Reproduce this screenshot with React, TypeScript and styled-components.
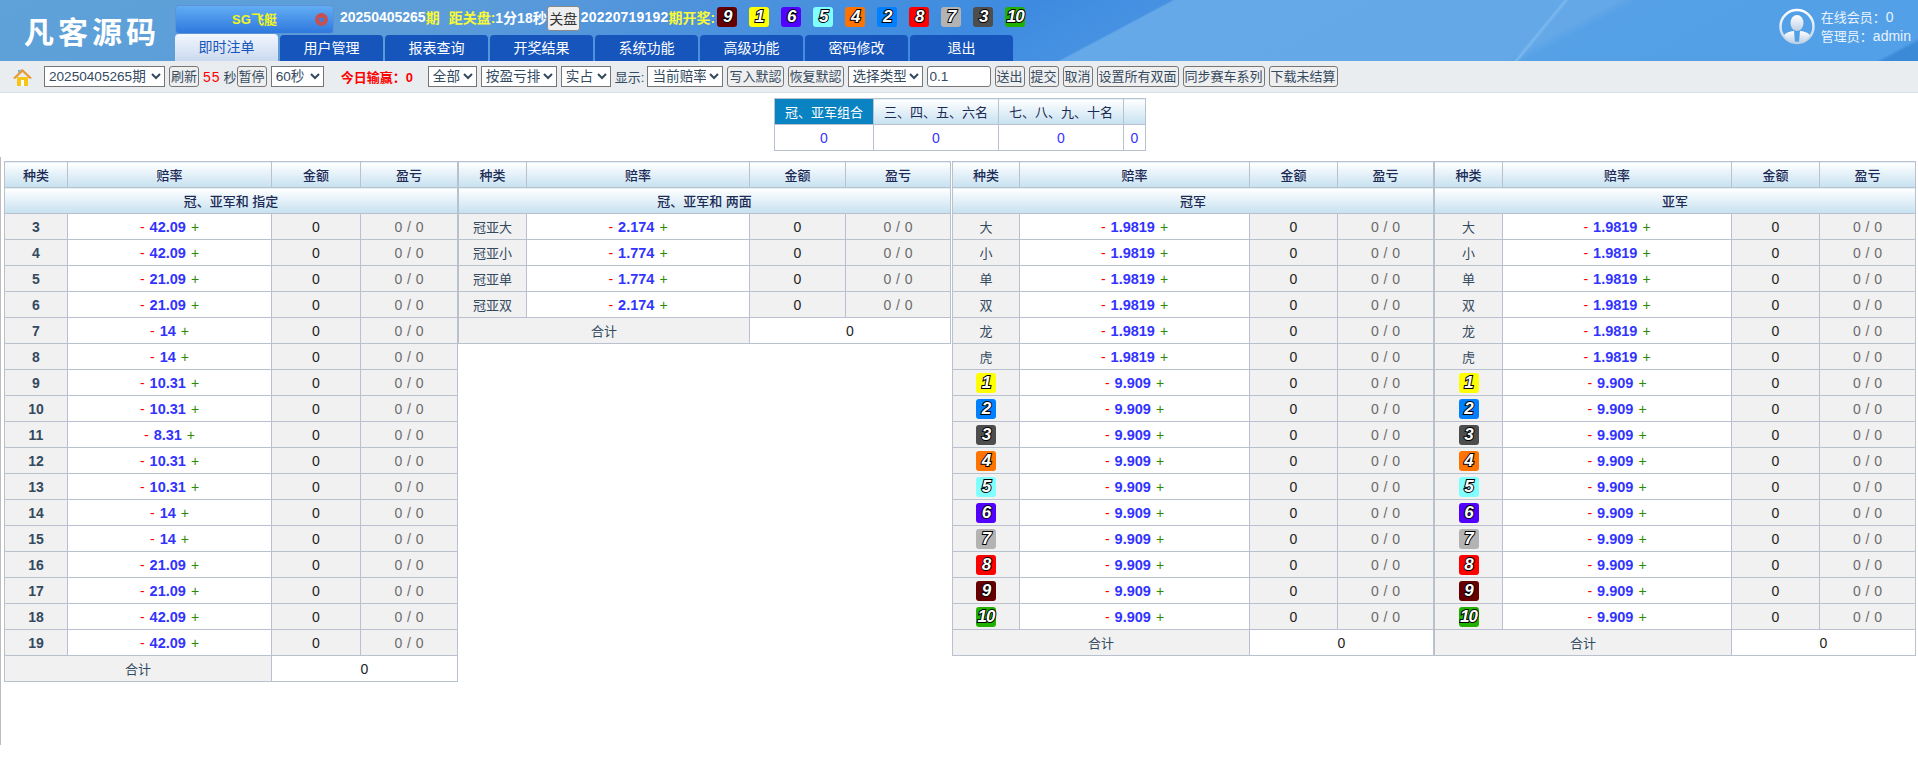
import styled, { createGlobalStyle } from 'styled-components'

const GlobalStyle = createGlobalStyle`
    html, body {
        margin: 0;
        padding: 0;
        background: #fff;
        overflow: hidden;
    }
    body {
        font-family: "Liberation Sans", "Noto Sans CJK SC", sans-serif;
        font-size: 13px;
        color: #344a5f;
    }
`

const Header = styled.header`
    display: flex;
    height: 61px;
    background:
        linear-gradient(129.4deg, transparent 1208px, #7cb8ee 1210px, transparent 1213px),
        linear-gradient(152deg, #5fa2d8 0, #5b9cd9 220px, #4f93dc 327px, #3d8be0 488px, #4791e2 550px, #66a9e8 552px, #64a8e8 760px, #55a0e6 770px, #52a0e8 934px, #3a8ad8 938px);
`

const Logo = styled.div`
    width: 175px;
    flex: none;
    padding: 13px 0 0 24px;
    box-sizing: border-box;
    color: #fff;
    font-size: 30px;
    line-height: 40px;
    font-weight: 700;
    letter-spacing: 4px;
    white-space: nowrap;
`

const HeaderMain = styled.div`
    display: flex;
    flex-direction: column;
`

const InfoRow = styled.div`
    display: flex;
    align-items: center;
    height: 34px;
    color: #fff;
    font-size: 14px;
    font-weight: 700;
    white-space: nowrap;
`

const GamePicker = styled.div`
    position: relative;
    width: 159px;
    height: 29px;
    margin: 4px 6px 0 0;
    box-sizing: border-box;
    border: 1px solid #5c92d6;
    border-radius: 4px;
    background: linear-gradient(#62adf4, #2f78de);
    color: #f2f51e;
    font-size: 13px;
    line-height: 27px;
    text-align: center;
`

const PickerCaret = styled.svg`
    position: absolute;
    right: 5px;
    top: 7px;
`

const Yellow = styled.span`
    color: #f6f93a;
`

const Gap = styled.span<{ $w: number }>`
    display: inline-block;
    width: ${p => p.$w}px;
`

const DrawNo = styled.span`
    letter-spacing: 0.2px;
`

const CloseButton = styled.button`
    width: 33px;
    height: 25px;
    margin: 3px 1px 0 0;
    padding: 0;
    border: 1px solid #8a8a8a;
    border-radius: 3px;
    background: #efefef;
    color: #333;
    font-family: inherit;
    font-size: 14px;
    line-height: 22px;
`

const BallRow = styled.div`
    display: flex;
    gap: 12px;
    margin-left: 2px;
`

const Ball = styled.span<{ $bg: string }>`
    display: inline-block;
    width: 20px;
    height: 20px;
    border-radius: 3px;
    background: ${p => p.$bg};
    color: #fff;
    font-family: "Liberation Sans", sans-serif;
    font-size: 17px;
    font-style: italic;
    font-weight: 700;
    line-height: 20px;
    text-align: center;
    vertical-align: middle;
    letter-spacing: -1px;
    -webkit-text-stroke: 2px #000;
    paint-order: stroke fill;
`

const TabRow = styled.nav`
    display: flex;
    align-items: flex-end;
    gap: 2px;
    height: 27px;
`

const Tab = styled.a<{ $active?: boolean }>`
    width: 103px;
    height: ${p => (p.$active ? 27 : 26)}px;
    border-radius: 4px 4px 0 0;
    background: ${p => (p.$active ? 'linear-gradient(#f2f7ff, #cbd9ee)' : '#1655bb')};
    color: ${p => (p.$active ? '#1655bb' : '#fff')};
    font-size: 14px;
    line-height: ${p => (p.$active ? 27 : 26)}px;
    text-align: center;
`

const UserBox = styled.div`
    display: flex;
    gap: 6px;
    margin-left: auto;
    padding: 8px 7px 0 0;
    color: #e9f3ff;
    line-height: 19px;
    white-space: nowrap;
`

const UserValue = styled.span`
    font-size: 14px;
`

const Toolbar = styled.div`
    display: flex;
    align-items: center;
    gap: 4px;
    height: 32px;
    padding-left: 13px;
    box-sizing: border-box;
    border-bottom: 1px solid #d7e2ec;
    background: #e9edf0;
    white-space: nowrap;
`

const HomeIcon = styled.svg`
    margin-right: 8px;
`

const Picker = styled.select<{ $w: number }>`
    width: ${p => p.$w}px;
    height: 21px;
    padding: 0;
    background: #fff;
    color: #344a5f;
    font-family: inherit;
    font-size: 13.6px;
`

const ToolButton = styled.button`
    height: 21px;
    padding: 0 1px;
    border: 1px solid #777;
    border-radius: 3px;
    background: #efefef;
    color: #344a5f;
    font-family: inherit;
    font-size: 13px;
    line-height: 18px;
`

const RateInput = styled.input`
    width: 64px;
    height: 21px;
    padding: 0 2px;
    box-sizing: border-box;
    border: 1px solid #777;
    border-radius: 3px;
    background: #fff;
    color: #344a5f;
    font-family: inherit;
    font-size: 13.6px;
`

const CountDown = styled.span`
    margin-right: -4px;
`

const Seconds = styled.span`
    color: #f00;
    font-size: 14px;
    letter-spacing: 1px;
    margin-right: 3px;
`

const TodayWin = styled.span`
    margin: 0 11px 0 13px;
    color: #f00;
    font-weight: 700;
`

const ShowLabel = styled.span`
    margin-right: -1px;
`

const RankTable = styled.table`
    width: 371px;
    margin: 5px auto 0;
    position: relative;
    left: 1px;
    border-collapse: collapse;
    table-layout: fixed;
`

const HeadCell = styled.th<{ $on?: boolean }>`
    height: 25px;
    padding: 0;
    border: 1px solid #b9c1ce;
    background: ${p => (p.$on ? '#0a83c2' : 'linear-gradient(#fff, #c6e1f1)')};
    color: ${p => (p.$on ? '#fff' : '#1c2a55')};
    font-size: 13px;
    font-weight: 400;
`

const RankValue = styled.td`
    height: 25px;
    padding: 0;
    border: 1px solid #b9c1ce;
    color: #3333ff;
    font-size: 14px;
    text-align: center;
`

const Board = styled.main`
    display: flex;
    align-items: flex-start;
    height: 588px;
    margin-top: 6px;
    padding: 4px 0 0 3px;
    border-left: 1px solid #bdbdbd;
    width: 1917px;
    box-sizing: border-box;
`

const OddsTable = styled.table<{ $w: number; $ml?: number }>`
    width: ${p => p.$w}px;
    margin-left: ${p => p.$ml ?? 0}px;
    flex: none;
    border-collapse: collapse;
    table-layout: fixed;
`

const TitleCell = styled.th`
    height: 25px;
    padding: 0;
    border: 1px solid #b9c1ce;
    background: linear-gradient(#fff, #c6e1f1);
    color: #1c2a55;
    font-size: 13px;
    font-weight: 500;
`

const Cell = styled.td<{ $kind?: 'label' | 'odds' | 'amount' | 'profit' | 'sum' }>`
    height: 25px;
    padding: 0;
    border: 1px solid #b9c1ce;
    background: ${p => (p.$kind === 'odds' || p.$kind === 'sum' ? '#fff' : '#f1f1f1')};
    color: ${p => (p.$kind === 'profit' ? '#6b6b6b' : p.$kind === 'amount' || p.$kind === 'sum' ? '#222' : '#344a5f')};
    font-size: ${p => (p.$kind === 'amount' || p.$kind === 'sum' || p.$kind === 'profit' ? 14 : 13)}px;
    word-spacing: ${p => (p.$kind === 'profit' ? 1 : 0)}px;
    text-align: center;
    white-space: nowrap;
`

const NumLabel = styled.b`
    font-size: 14px;
`

const Minus = styled.span`
    color: #f00;
    font-size: 14px;
`

const Rate = styled.b`
    margin: 0 5px;
    color: #3333ff;
    font-size: 14.5px;
`

const Plus = styled.span`
    color: #2a8a00;
    font-size: 14px;
`

const ballColors: Record<number, string> = {
    1: '#ffff00',
    2: '#0080ff',
    3: '#4d4d4d',
    4: '#ff7300',
    5: '#80ffff',
    6: '#5200ff',
    7: '#b3b3b3',
    8: '#ff0000',
    9: '#660000',
    10: '#22b000',
}

const tabs = ['即时注单', '用户管理', '报表查询', '开奖结果', '系统功能', '高级功能', '密码修改', '退出']
const drawn = [9, 1, 6, 5, 4, 2, 8, 7, 3, 10]

interface Row {
    label: React.ReactNode
    rate: string
}

const sumOdds: [number, string][] = [
    [3, '42.09'], [4, '42.09'], [5, '21.09'], [6, '21.09'], [7, '14'], [8, '14'], [9, '10.31'], [10, '10.31'],
    [11, '8.31'], [12, '10.31'], [13, '10.31'], [14, '14'], [15, '14'], [16, '21.09'], [17, '21.09'], [18, '42.09'], [19, '42.09'],
]

const sumRows: Row[] = sumOdds.map(([n, rate]) => ({ label: <NumLabel>{n}</NumLabel>, rate }))

const pairRows: Row[] = [
    { label: '冠亚大', rate: '2.174' },
    { label: '冠亚小', rate: '1.774' },
    { label: '冠亚单', rate: '1.774' },
    { label: '冠亚双', rate: '2.174' },
]

const placeRows: Row[] = [
    ...['大', '小', '单', '双', '龙', '虎'].map(label => ({ label, rate: '1.9819' })),
    ...[1, 2, 3, 4, 5, 6, 7, 8, 9, 10].map(n => ({
        label: <Ball $bg={ballColors[n]}>{n}</Ball>,
        rate: '9.909',
    })),
]

const Section = ({ title, cols, rows, width, ml }: { title: string, cols: number[], rows: Row[], width: number, ml?: number }) => (
    <OddsTable $w={width} $ml={ml}>
        <colgroup>
            {cols.map((c, i) => <col key={i} width={c} />)}
        </colgroup>
        <thead>
            <tr>
                {['种类', '赔率', '金额', '盈亏'].map(h => <TitleCell key={h}>{h}</TitleCell>)}
            </tr>
            <tr>
                <TitleCell colSpan={4}>{title}</TitleCell>
            </tr>
        </thead>
        <tbody>
            {rows.map((row, i) => (
                <tr key={i}>
                    <Cell $kind='label'>{row.label}</Cell>
                    <Cell $kind='odds'>
                        <Minus>-</Minus><Rate>{row.rate}</Rate><Plus>+</Plus>
                    </Cell>
                    <Cell $kind='amount'>0</Cell>
                    <Cell $kind='profit'>0 / 0</Cell>
                </tr>
            ))}
            <tr>
                <Cell colSpan={2}>合计</Cell>
                <Cell colSpan={2} $kind='sum'>0</Cell>
            </tr>
        </tbody>
    </OddsTable>
)

const App = () => {
    return (
        <>
            <GlobalStyle />
            <Header>
                <Logo>凡客源码</Logo>
                <HeaderMain>
                    <InfoRow>
                        <GamePicker>
                            SG飞艇
                            <PickerCaret width='13' height='13' viewBox='0 0 13 13'>
                                <circle cx='6.5' cy='6.5' r='6.5' fill='#c8504f' />
                                <path d='M3 5h7L6.5 10z' fill='#3d7fe0' />
                            </PickerCaret>
                        </GamePicker>
                        20250405265<Yellow>期</Yellow>
                        <Gap $w={9} />
                        <Yellow>距关盘:</Yellow>1分18秒
                        <CloseButton>关盘</CloseButton>
                        <DrawNo>20220719192</DrawNo><Yellow>期开奖:</Yellow>
                        <BallRow>
                            {drawn.map(n => <Ball key={n} $bg={ballColors[n]}>{n}</Ball>)}
                        </BallRow>
                    </InfoRow>
                    <TabRow>
                        {tabs.map((t, i) => <Tab key={t} $active={i === 0}>{t}</Tab>)}
                    </TabRow>
                </HeaderMain>
                <UserBox>
                    <svg width='36' height='37' viewBox='0 0 36 37'>
                        <defs>
                            <linearGradient id='ava' x1='0' y1='0' x2='0' y2='1'>
                                <stop offset='0' stopColor='#ffffff' />
                                <stop offset='1' stopColor='#bcd0e6' />
                            </linearGradient>
                        </defs>
                        <circle cx='18' cy='18.5' r='16.5' fill='none' stroke='url(#ava)' strokeWidth='2.5' />
                        <ellipse cx='18' cy='15' rx='6.5' ry='8' fill='url(#ava)' />
                        <path d='M5 27c3-3 7-4 10-4l1 12c-5-1-9-4-11-8z' fill='url(#ava)' />
                        <path d='M31 27c-3-3-7-4-10-4l-1 12c5-1 9-4 11-8z' fill='url(#ava)' />
                    </svg>
                    <div>
                        在线会员：<UserValue>0</UserValue><br />
                        管理员：<UserValue>admin</UserValue>
                    </div>
                </UserBox>
            </Header>
            <Toolbar>
                <HomeIcon width='19' height='18' viewBox='0 0 19 18'>
                    <path d='M4 9h11v9H4z' fill='#f5c518' />
                    <path d='M8 12h3v6H8z' fill='#fff' />
                    <path d='M0 10L9.500 1 19 10l-2 1-7.500-7L2 11z' fill='#e9982d' />
                    <path d='M9.500 1L5 5.300V2h2z' fill='#7fb2c8' />
                </HomeIcon>
                <Picker $w={121}><option>20250405265期</option></Picker>
                <ToolButton>刷新</ToolButton>
                <CountDown><Seconds>55</Seconds>秒</CountDown>
                <ToolButton>暂停</ToolButton>
                <Picker $w={53}><option>60秒</option></Picker>
                <TodayWin>今日输赢：0</TodayWin>
                <Picker $w={49}><option>全部</option></Picker>
                <Picker $w={76}><option>按盈亏排</option></Picker>
                <Picker $w={50}><option>实占</option></Picker>
                <ShowLabel>显示:</ShowLabel>
                <Picker $w={76}><option>当前赔率</option></Picker>
                <ToolButton>写入默認</ToolButton>
                <ToolButton>恢复默認</ToolButton>
                <Picker $w={75}><option>选择类型</option></Picker>
                <RateInput defaultValue='0.1' />
                <ToolButton>送出</ToolButton>
                <ToolButton>提交</ToolButton>
                <ToolButton>取消</ToolButton>
                <ToolButton>设置所有双面</ToolButton>
                <ToolButton>同步赛车系列</ToolButton>
                <ToolButton>下载未结算</ToolButton>
            </Toolbar>
            <RankTable>
                <colgroup>
                    <col width='99' />
                    <col width='125' />
                    <col width='125' />
                    <col width='22' />
                </colgroup>
                <thead>
                    <tr>
                        <HeadCell $on>冠、亚军组合</HeadCell>
                        <HeadCell>三、四、五、六名</HeadCell>
                        <HeadCell>七、八、九、十名</HeadCell>
                        <HeadCell />
                    </tr>
                </thead>
                <tbody>
                    <tr>
                        <RankValue>0</RankValue>
                        <RankValue>0</RankValue>
                        <RankValue>0</RankValue>
                        <RankValue>0</RankValue>
                    </tr>
                </tbody>
            </RankTable>
            <Board>
                <Section title='冠、亚军和 指定' cols={[63, 204, 89, 97]} rows={sumRows} width={453} />
                <Section title='冠、亚军和 两面' cols={[68, 223, 96, 105]} rows={pairRows} width={492} />
                <Section title='冠军' cols={[67, 230, 88, 96]} rows={placeRows} width={481} ml={1} />
                <Section title='亚军' cols={[68, 229, 88, 96]} rows={placeRows} width={481} />
            </Board>
        </>
    )
}

export default App
